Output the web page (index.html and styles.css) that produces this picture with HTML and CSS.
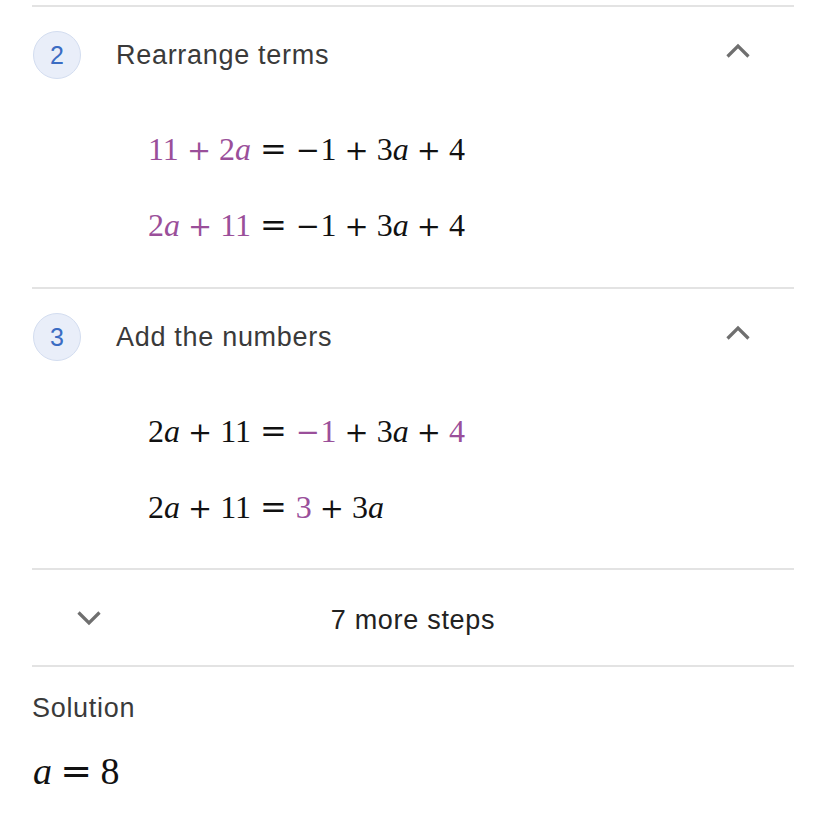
FILE: index.html
```html
<!DOCTYPE html>
<html>
<head>
<meta charset="utf-8">
<link rel="stylesheet" href="styles.css">
</head>
<body>
<div class="page">
  <section class="step">
    <div class="step-head">
      <div class="num">2</div>
      <div class="title">Rearrange terms</div>
      <svg class="chev" width="26" height="16" viewBox="0 0 26 16"><path d="M2.5 13.5 L13 3 L23.5 13.5" fill="none" stroke="#6f6f6f" stroke-width="3.2"/></svg>
    </div>
    <div class="math-block">
      <div class="eq"><span class="hl">11<span class="bin">+</span>2<i>a</i></span><span class="rel">=</span><span class="op">−</span>1<span class="bin">+</span>3<i>a</i><span class="bin">+</span>4</div>
      <div class="eq"><span class="hl">2<i>a</i><span class="bin">+</span>11</span><span class="rel">=</span><span class="op">−</span>1<span class="bin">+</span>3<i>a</i><span class="bin">+</span>4</div>
    </div>
  </section>
  <section class="step step-last">
    <div class="step-head">
      <div class="num">3</div>
      <div class="title">Add the numbers</div>
      <svg class="chev" width="26" height="16" viewBox="0 0 26 16"><path d="M2.5 13.5 L13 3 L23.5 13.5" fill="none" stroke="#6f6f6f" stroke-width="3.2"/></svg>
    </div>
    <div class="math-block">
      <div class="eq">2<i>a</i><span class="bin">+</span>11<span class="rel">=</span><span class="hl"><span class="op">−</span>1</span><span class="bin">+</span>3<i>a</i><span class="bin">+</span><span class="hl">4</span></div>
      <div class="eq">2<i>a</i><span class="bin">+</span>11<span class="rel">=</span><span class="hl">3</span><span class="bin">+</span>3<i>a</i></div>
    </div>
  </section>
  <section class="more">
    <svg class="chev-down" width="26" height="16" viewBox="0 0 26 16"><path d="M2.5 2.5 L13 13 L23.5 2.5" fill="none" stroke="#6f6f6f" stroke-width="3.2"/></svg>
    <div class="more-text">7 more steps</div>
  </section>
  <section class="solution">
    <div class="sol-title">Solution</div>
    <div class="sol-eq"><i>a</i><span class="rel">=</span>8</div>
  </section>
</div>
</body>
</html>
```

FILE: styles.css
```css
html, body {
  margin: 0;
  padding: 0;
  background: #ffffff;
}
.page {
  margin: 0 32px;
  width: 762px;
  font-family: "Liberation Sans", Arial, sans-serif;
}
.step {
  border-top: 2px solid #e3e3e3;
  padding-bottom: 24px;
}
.step:first-child {
  margin-top: 5px;
}
.step-last {
  padding-bottom: 23px;
}
.step-head {
  display: flex;
  align-items: center;
  height: 48px;
  margin-top: 24px;
}
.num {
  width: 48px;
  height: 48px;
  box-sizing: border-box;
  border: 1px solid #d3ddf0;
  background: #e9eef9;
  border-radius: 50%;
  color: #3b6cc3;
  font-size: 25px;
  display: flex;
  align-items: center;
  justify-content: center;
  margin-left: 1px;
}
.title {
  margin-left: 35px;
  font-size: 27px;
  letter-spacing: 0.7px;
  color: #3a3a3a;
  flex: 1;
}
.chev {
  margin-right: 43px;
  margin-top: -8px;
}
.math-block {
  margin-top: 32px;
  padding-left: 116px;
}
.eq {
  font-family: "Liberation Serif", "Times New Roman", serif;
  font-size: 32px;
  line-height: 76px;
  height: 76px;
  color: #111;
  white-space: nowrap;
}
.eq i, .sol-eq i {
  font-style: italic;
}
.hl {
  color: #9a4f9a;
}
.bin, .rel, .op {
  font-family: "DejaVu Serif", serif;
  font-size: 0.9em;
  line-height: 0;
}
.rel {
  font-size: 1em;
}
.bin {
  margin: 0 0.28em;
}
.rel {
  margin: 0 0.28em;
}
.op {
  margin-right: 0.02em;
}
.more {
  border-top: 2px solid #e3e3e3;
  border-bottom: 2px solid #e3e3e3;
  height: 95px;
  display: flex;
  align-items: center;
  position: relative;
}
.chev-down {
  margin-left: 44px;
}
.more-text {
  position: absolute;
  left: 0;
  right: 0;
  top: 33px;
  text-align: center;
  font-size: 27px;
  line-height: 34px;
  letter-spacing: 0.7px;
  color: #222;
}
.solution {
  padding-top: 24px;
}
.sol-title {
  font-size: 27px;
  letter-spacing: 0.7px;
  color: #3a3a3a;
  line-height: 34px;
}
.sol-eq {
  font-family: "Liberation Serif", "Times New Roman", serif;
  font-size: 38px;
  margin-top: 24px;
  color: #111;
  padding-left: 1px;
}
.sol-eq .rel {
  margin: 0 0.22em;
}
```
